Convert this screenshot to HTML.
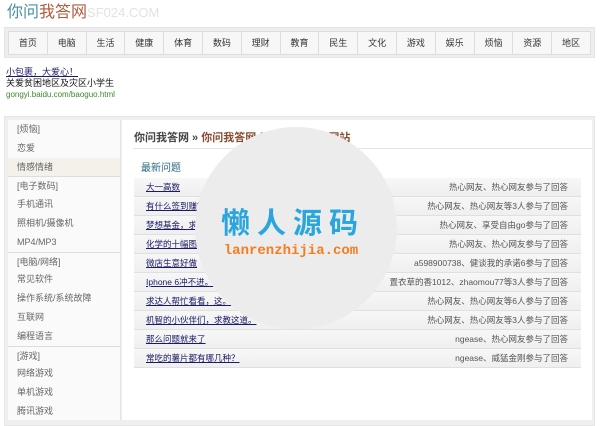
<!DOCTYPE html>
<html><head><meta charset="utf-8"><style>
*{margin:0;padding:0;box-sizing:border-box}
body{width:600px;height:419px;overflow:hidden;background:#fff;font-family:"Liberation Sans","Noto Sans CJK SC",sans-serif;font-size:9px;color:#333;position:relative}
.abs{position:absolute}
#logo{left:7px;top:3px;font-size:16px;line-height:20px;white-space:nowrap}
#nav{left:4px;top:27px;width:591px;height:31px;background:#eee;border:1px solid #e4e4e4}
#nav .in{position:absolute;left:3px;top:3px;right:3px;height:24px;background:#f7f7f7;border:1px solid #ddd;display:flex}
#nav span{flex:1;text-align:center;line-height:22px;font-size:9px;color:#333;border-right:1px solid #ddd}
#nav span:last-child{border-right:none}
#ad{left:6px;top:67px;font-size:9px;line-height:11px}
#main{left:4px;top:116px;width:591px;height:310px;background:#efefef;border:1px solid #e6e6e6}
#side{left:8px;top:120px;width:113px;height:300px;background:#fafafa;border-right:1px solid #e5e5e5}
#side div{height:18.8px;line-height:18.8px;padding-left:9px;color:#666;font-size:9px}
#side .h{border-top:1px solid #ddd}
#content{left:122px;top:120px;width:470px;height:300px;background:#fff}
.row{position:absolute;left:134px;width:447px;height:19px;background:linear-gradient(#f7f7f7,#efefef);border-bottom:1px solid #e0e0e0;font-size:8.5px;line-height:18px}
.row a{position:absolute;left:12px;color:#1a1a66;text-decoration:underline}
.row b{position:absolute;right:13px;font-weight:normal;color:#555}
</style></head><body>
<div class="abs" id="logo"><span style="color:#4b8fa0">你问</span><span style="color:#b05a3c">我答网</span><span style="color:#e2e2e2;font-size:13px">SF024.COM</span></div>
<div class="abs" id="nav"><div class="in"><span>首页</span><span>电脑</span><span>生活</span><span>健康</span><span>体育</span><span>数码</span><span>理财</span><span>教育</span><span>民生</span><span>文化</span><span>游戏</span><span>娱乐</span><span>烦恼</span><span>资源</span><span>地区</span></div></div>
<div class="abs" id="ad"><div style="text-decoration:underline;color:#1a1a66">小包裹，大爱心！</div><div style="color:#111">关爱贫困地区及灾区小学生</div><div style="color:#3a8a2a;font-size:8px">gongyi.baidu.com/baoguo.html</div></div>
<div class="abs" id="main"></div>
<div class="abs" id="side">
<div>[烦恼]</div><div>恋爱</div><div style="background:#f3f1ea">情感情绪</div>
<div class="h">[电子数码]</div><div>手机通讯</div><div>照相机/摄像机</div><div>MP4/MP3</div>
<div class="h">[电脑/网络]</div><div>常见软件</div><div>操作系统/系统故障</div><div>互联网</div><div>编程语言</div>
<div class="h">[游戏]</div><div>网络游戏</div><div>单机游戏</div><div>腾讯游戏</div></div>
<div class="abs" id="content"></div>
<div class="abs" style="left:134px;top:129px;font-size:11px;font-weight:bold;color:#444;white-space:nowrap">你问我答网 » <span style="color:#8a4a30">你问我答网 用户互助 问答网站</span></div>
<div class="abs" style="left:133px;top:148px;width:459px;height:1px;background:#e5e5e5"></div>
<div class="abs" style="left:141px;top:159px;font-size:10px;color:#2a6a80">最新问题</div>
<div class="row" style="top:178px"><a>大一高数</a><b>热心网友、热心网友参与了回答</b></div>
<div class="row" style="top:197px"><a>有什么签到赚钱</a><b>热心网友、热心网友等3人参与了回答</b></div>
<div class="row" style="top:216px"><a>梦想基金，求</a><b>热心网友、享受自由go参与了回答</b></div>
<div class="row" style="top:235px"><a>化学的十幅图</a><b>热心网友、热心网友参与了回答</b></div>
<div class="row" style="top:254px"><a>微店生意好做</a><b>a598900738、健谈我的承诺6参与了回答</b></div>
<div class="row" style="top:273px"><a>Iphone 6冲不进。</a><b>置衣草的香1012、zhaomou77等3人参与了回答</b></div>
<div class="row" style="top:292px"><a>求达人帮忙看看，这。</a><b>热心网友、热心网友等6人参与了回答</b></div>
<div class="row" style="top:311px"><a>机智的小伙伴们，求教这道。</a><b>热心网友、热心网友等3人参与了回答</b></div>
<div class="row" style="top:330px"><a>那么问题就来了</a><b>ngease、热心网友参与了回答</b></div>
<div class="row" style="top:349px"><a>常吃的薯片都有哪几种？</a><b>ngease、威猛金刚参与了回答</b></div>
<div class="abs" style="left:195px;top:127px;width:202px;height:202px;border-radius:50%;background:#ececec"></div>
<div class="abs" style="left:218px;top:207px;width:150px;text-align:center;font-size:29px;font-weight:bold;color:#2aa6df;letter-spacing:7px;line-height:34px;white-space:nowrap">懒人源码</div>
<div class="abs" style="left:216px;top:243px;width:150px;text-align:center;font-family:'Liberation Mono',monospace;font-size:14px;font-weight:bold;color:#f57d20;line-height:16px;white-space:nowrap">lanrenzhijia.com</div>
</body></html>
